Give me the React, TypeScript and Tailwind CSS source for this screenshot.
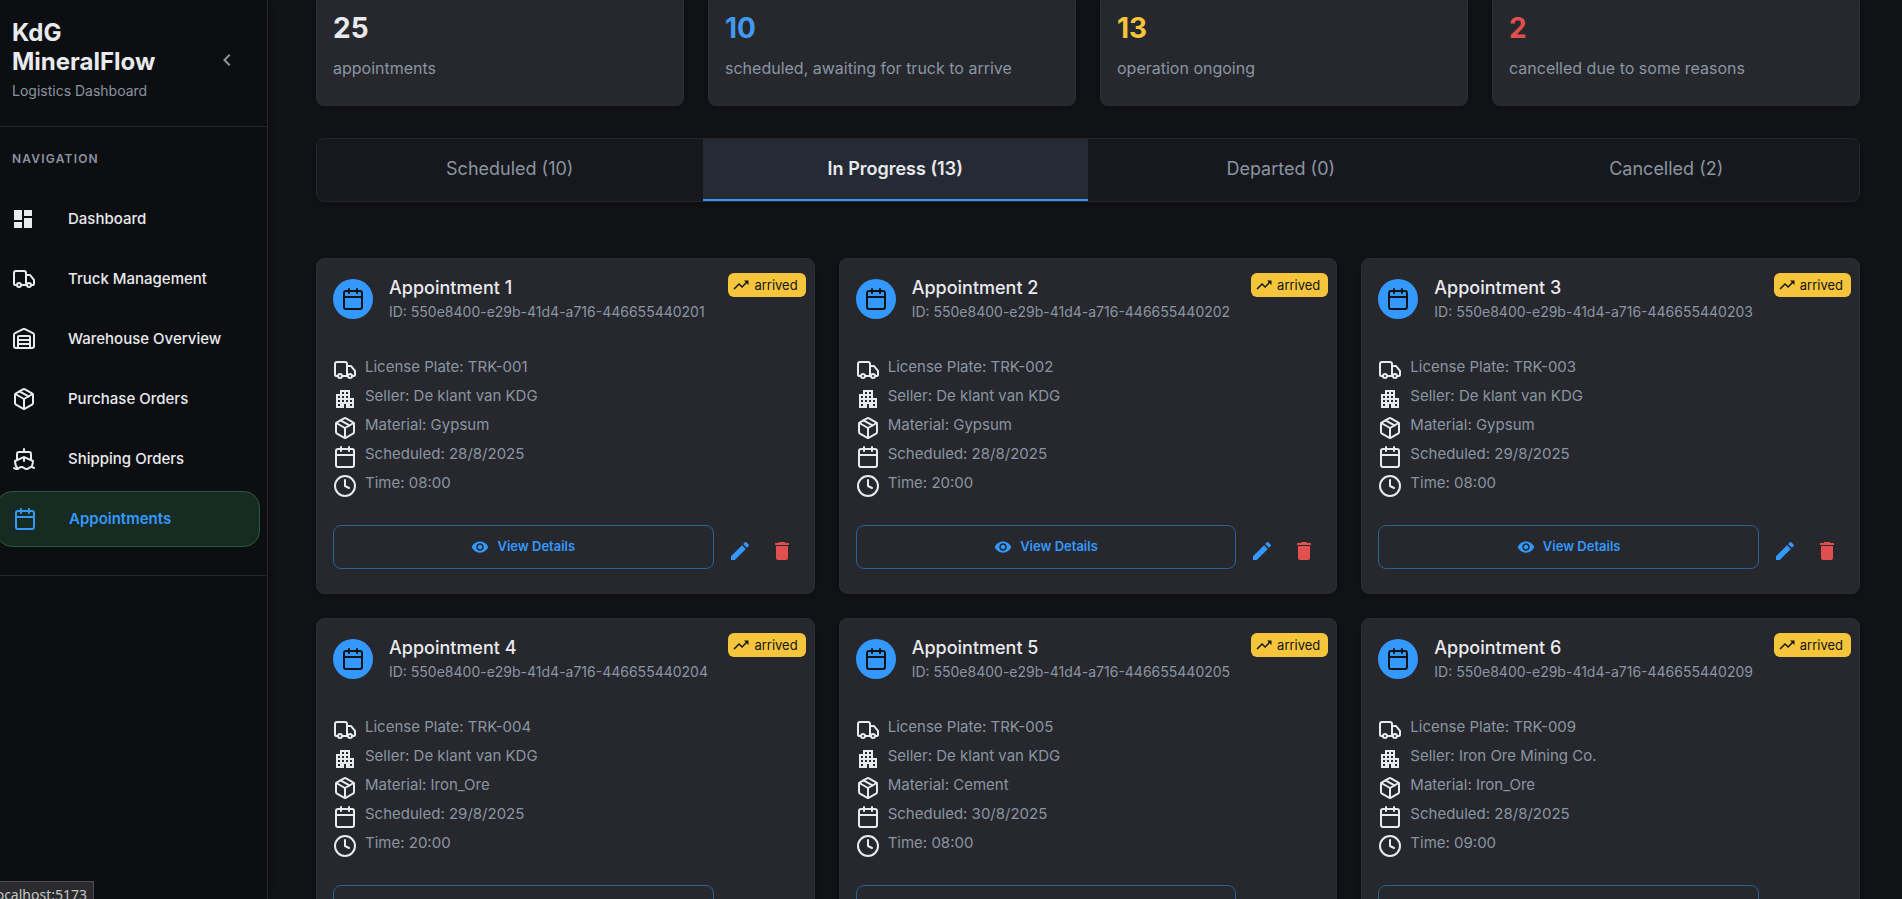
import type { ComponentType } from "react";
import { Calendar, Clock, Package, Ship, Truck, Warehouse } from "lucide-react";
import {
  MdApartment,
  MdChevronLeft,
  MdDashboard,
  MdDelete,
  MdEdit,
  MdTrendingUp,
  MdVisibility,
} from "react-icons/md";

type IconType = ComponentType<{ size?: number | string; className?: string }>;

const navItems: { label: string; icon: IconType; active?: boolean }[] = [
  { label: "Dashboard", icon: MdDashboard },
  { label: "Truck Management", icon: Truck },
  { label: "Warehouse Overview", icon: Warehouse },
  { label: "Purchase Orders", icon: Package },
  { label: "Shipping Orders", icon: Ship },
  { label: "Appointments", icon: Calendar, active: true },
];

const stats = [
  { value: 25, label: "appointments", color: "text-[#e8eaed]" },
  { value: 10, label: "scheduled, awaiting for truck to arrive", color: "text-[#4299f0]" },
  { value: 13, label: "operation ongoing", color: "text-[#f5c63c]" },
  { value: 2, label: "cancelled due to some reasons", color: "text-[#e0504f]" },
];

const tabs = [
  { label: "Scheduled (10)" },
  { label: "In Progress (13)", active: true },
  { label: "Departed (0)" },
  { label: "Cancelled (2)" },
];

interface Appointment {
  suffix: string;
  seller: string;
  material: string;
  date: string;
  time: string;
}

const appointments: Appointment[] = [
  { suffix: "01", seller: "De klant van KDG", material: "Gypsum", date: "28/8/2025", time: "08:00" },
  { suffix: "02", seller: "De klant van KDG", material: "Gypsum", date: "28/8/2025", time: "20:00" },
  { suffix: "03", seller: "De klant van KDG", material: "Gypsum", date: "29/8/2025", time: "08:00" },
  { suffix: "04", seller: "De klant van KDG", material: "Iron_Ore", date: "29/8/2025", time: "20:00" },
  { suffix: "05", seller: "De klant van KDG", material: "Cement", date: "30/8/2025", time: "08:00" },
  { suffix: "09", seller: "Iron Ore Mining Co.", material: "Iron_Ore", date: "28/8/2025", time: "09:00" },
];

function Sidebar() {
  return (
    <aside className="z-10 flex w-[268px] shrink-0 flex-col border-r border-[#26272e] bg-[#0d0e12] shadow-[2px_0_8px_rgba(0,0,0,0.3)]">
      <div className="flex items-center justify-between border-b border-[#26272e] pt-[18px] pr-6 pb-6 pl-3">
        <div>
          <h1 className="w-40 text-2xl leading-[29px] font-bold text-[#e8eaed]">KdG MineralFlow</h1>
          <p className="mt-1 text-sm leading-[22px] text-[#8a95a1]">Logistics Dashboard</p>
        </div>
        <button type="button" aria-label="Collapse sidebar" className="p-1 text-[#8a95a1]">
          <MdChevronLeft size={24} />
        </button>
      </div>
      <nav className="border-b border-[#26272e] pt-6 pb-7">
        <h2 className="pl-3 text-xs leading-4 font-semibold tracking-widest text-[#8a95a1]">NAVIGATION</h2>
        <ul className="mt-6 -ml-1 flex flex-col gap-1 pr-[7px]">
          {navItems.map(({ label, icon: Icon, active }) => (
            <li key={label}>
              <a
                href="#"
                className={
                  active
                    ? "flex h-14 items-center gap-8 rounded-2xl border border-[#235a38] bg-[#182b23] px-4 text-[15px] font-semibold text-[#3399ff]"
                    : "flex h-14 items-center gap-8 rounded-2xl px-4 text-[15px] font-medium text-[#e8eaed]"
                }
              >
                <span className="flex w-6 justify-center">
                  <Icon size={24} className={Icon === MdDashboard ? "-ml-0.5" : ""} />
                </span>
                {label}
              </a>
            </li>
          ))}
        </ul>
      </nav>
    </aside>
  );
}

function Detail({ icon: Icon, children }: { icon: IconType; children: string }) {
  return (
    <li className="flex h-[29px] gap-2 text-[15px] leading-[26px] text-[#8a95a1]">
      <Icon size={24} className="mt-1 shrink-0 text-[#e8eaed]" />
      {children}
    </li>
  );
}

function AppointmentCard({ index, data }: { index: number; data: Appointment }) {
  return (
    <article className="rounded-lg border border-[#2b2c34] bg-[#27282e] px-4 pt-3.5 pb-6 shadow-[0_2px_8px_rgba(0,0,0,0.3)]">
      <div className="-mr-2 flex items-start justify-between">
        <div className="flex gap-4">
          <span className="mt-1.5 flex size-10 items-center justify-center rounded-full bg-[#3399ff] text-[#121317]">
            <Calendar size={24} />
          </span>
          <div>
            <h3 className="text-lg leading-[30px] font-medium text-[#e8eaed]">Appointment {index}</h3>
            <p className="text-sm leading-[18px] text-[#8a95a1]">ID: 550e8400-e29b-41d4-a716-4466554402{data.suffix}</p>
          </div>
        </div>
        <span className="flex h-6 items-center gap-1 rounded-md bg-[#f5c63c] pr-2 pl-1 text-[13px] leading-6 text-[#121317]">
          <MdTrendingUp size={18} />
          arrived
        </span>
      </div>
      <ul className="mt-[33px] flex flex-col">
        <Detail icon={Truck}>{"License Plate: TRK-0" + data.suffix}</Detail>
        <Detail icon={MdApartment}>{"Seller: " + data.seller}</Detail>
        <Detail icon={Package}>{"Material: " + data.material}</Detail>
        <Detail icon={Calendar}>{"Scheduled: " + data.date}</Detail>
        <Detail icon={Clock}>{"Time: " + data.time}</Detail>
      </ul>
      <div className="mt-[26px] flex items-center gap-2.5">
        <button
          type="button"
          className="flex h-11 flex-1 items-center justify-center gap-2 rounded-lg border border-[#2b6199] text-[13px] font-semibold text-[#3399ff]"
        >
          <MdVisibility size={18} />
          View Details
        </button>
        <div className="flex gap-2.5 pt-2">
          <button type="button" aria-label="Edit appointment" className="p-1 text-[#3399ff]">
            <MdEdit size={24} />
          </button>
          <button type="button" aria-label="Delete appointment" className="p-1 text-[#e0504f]">
            <MdDelete size={24} />
          </button>
        </div>
      </div>
    </article>
  );
}

export default function App() {
  return (
    <div className="flex h-screen overflow-hidden bg-[#121317] font-['Inter',sans-serif]">
      <Sidebar />
      <main className="min-w-0 flex-1 overflow-hidden pr-[42px] pl-12">
        <section className="grid grid-cols-4 gap-6">
          {stats.map((s) => (
            <div
              key={s.label}
              className="rounded-b-lg border border-t-0 border-[#2b2c34] bg-[#27282e] px-4 pt-2.5 pb-6 shadow-[0_2px_8px_rgba(0,0,0,0.3)]"
            >
              <p className={"text-[28px] leading-9 font-bold " + s.color}>{s.value}</p>
              <p className="mt-2.5 text-base leading-[25px] text-[#8a95a1]">{s.label}</p>
            </div>
          ))}
        </section>
        <div
          role="tablist"
          className="mt-8 grid h-16 grid-cols-4 overflow-hidden rounded-lg border border-[#26272e] bg-[#17181d] shadow-[0_2px_8px_rgba(0,0,0,0.3)]"
        >
          {tabs.map((t) => (
            <button
              key={t.label}
              type="button"
              role="tab"
              aria-selected={!!t.active}
              className={
                t.active
                  ? "border-b-2 border-[#3399ff] bg-[#262a35] text-lg font-semibold text-[#e8eaed]"
                  : "border-b-2 border-transparent text-lg text-[#8a95a1]"
              }
            >
              {t.label}
            </button>
          ))}
        </div>
        <section className="mt-14 grid grid-cols-3 gap-6">
          {appointments.map((a, i) => (
            <AppointmentCard key={a.suffix} index={i + 1} data={a} />
          ))}
        </section>
      </main>
      <div className="fixed -bottom-2.5 left-0 z-20 flex h-7 w-[94px] items-center justify-end overflow-hidden border border-l-0 border-[#4c4d50] bg-[#2b2b2d] pr-1.5 font-['Noto_Sans',sans-serif] text-sm text-[#c4c5c7]">
        localhost:5173
      </div>
    </div>
  );
}
